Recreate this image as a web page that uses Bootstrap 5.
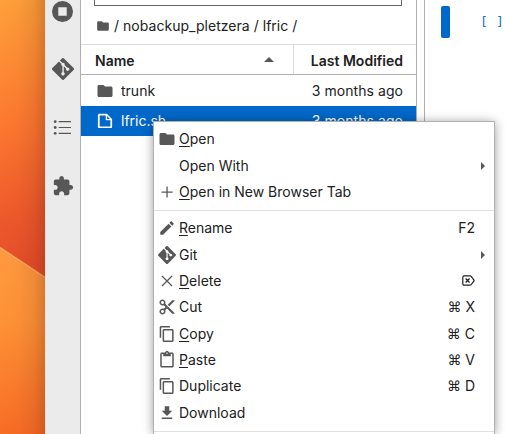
<!DOCTYPE html>
<html lang="en">
<head>
<meta charset="utf-8">
<title>File browser</title>
<link href="https://cdn.jsdelivr.net/npm/bootstrap@5.3.0/dist/css/bootstrap.min.css" rel="stylesheet">
<style>
body{font-family:Inter,"Liberation Sans",sans-serif;font-size:14px;line-height:20px;color:#212121;width:506px;height:434px}
.wall{width:45px}
.rail{width:36px;background:#ebebeb;border-right:1px solid #b0b0b0}
.rail svg{fill:#575757;display:block}
.rail-item{height:58.3px}
.rail-list{margin-top:-18px}
.browser{width:336px;border-right:1px solid #b0b0b0}
.filter{height:6px;margin:0 14px 0 13px;border:1px solid #666;border-top:0}
.crumbs{height:39px;padding:1px 0 0 15px;border-bottom:1px solid #dcdcdc;letter-spacing:.03px;white-space:pre}
.crumbs svg,.file-row svg{fill:#575757}
.head{height:30px;border-bottom:1px solid #b0b0b0;font-weight:600;padding-top:3px}
.head-name{width:213px;padding:3px 19px 0 14px;border-right:1px solid #dcdcdc;margin-top:-3px}
.head-mod{padding-right:13px}
.file-list{padding-top:1px}
.file-row{height:30px;padding:0 13px 0 15px}
.file-row.picked{background:#0068c9;color:#fff}
.file-row.picked svg{fill:#fff}
.file-label{margin-left:7px}
.ago{letter-spacing:.06px}
.gutter{width:8px;border-right:1px solid #b0b0b0}
.cell-bar{width:9px;height:32px;margin:6px 0 0 16px;border-radius:2px;background:#0068c9}
.prompt{font-family:"DejaVu Sans Mono",monospace;font-size:13px;color:#1f70b8;margin:12px 0 0 30px;white-space:pre;letter-spacing:.2px}
.ctx{position:absolute;left:153px;top:121px;bottom:0;width:342px;background:#fff;border:1px solid #b0b0b0;border-bottom:0;box-shadow:0 1px 10px rgba(0,0,0,.38)}
.ctx-body{height:313px;padding-top:4px}
.ctx-item{height:26.36px;padding:0 9px 0 4px}
.ctx-icon{width:18px;height:18px;margin-right:3px}
.ctx-icon svg{display:block;fill:#575757}
.ctx u{text-underline-offset:2px;text-decoration-thickness:1px}
.keys{margin-right:10px}
.keys span{font-family:"DejaVu Sans",sans-serif;font-size:14px}
.sep{height:1px;background:#e2e2e2;margin:5px 0 4px}
.sep:last-child{margin-bottom:0}
</style>
</head>
<body class="overflow-hidden bg-white position-relative">
<svg width="0" height="0" class="position-absolute">
<symbol id="folder" viewBox="0 0 24 24"><path d="M10 4H4c-1.1 0-1.99.9-1.99 2L2 18c0 1.1.9 2 2 2h16c1.1 0 2-.9 2-2V8c0-1.1-.9-2-2-2h-8l-2-2z"/></symbol>
<symbol id="git" viewBox="0 0 92 92"><path d="M90.156 41.965 50.036 1.848a5.918 5.918 0 0 0-8.372 0l-8.328 8.332 10.566 10.566a7.03 7.03 0 0 1 7.23 1.684 7.034 7.034 0 0 1 1.669 7.277l10.187 10.184a7.028 7.028 0 0 1 7.278 1.672 7.04 7.04 0 0 1 0 9.957 7.05 7.05 0 0 1-9.965 0 7.044 7.044 0 0 1-1.528-7.66l-9.5-9.497V59.36a7.04 7.04 0 0 1 1.86 11.29 7.04 7.04 0 0 1-9.957 0 7.04 7.04 0 0 1 0-9.958 7.06 7.06 0 0 1 2.304-1.539V33.926a7.049 7.049 0 0 1-3.82-9.234L29.242 14.272 1.73 41.777a5.918 5.918 0 0 0 0 8.371L41.852 90.27a5.925 5.925 0 0 0 8.37 0l39.934-39.934a5.925 5.925 0 0 0 0-8.371"/></symbol>
<symbol id="copy" viewBox="0 0 18 18"><path d="M11.9,1H3.2C2.4,1,1.7,1.7,1.7,2.5v10.2h1.5V2.5h8.7V1z M14.1,3.9h-8c-0.8,0-1.5,0.7-1.5,1.5v10.2c0,0.8,0.7,1.5,1.5,1.5h8c0.8,0,1.5-0.7,1.5-1.5V5.4C15.5,4.6,14.9,3.9,14.1,3.9z M14.1,15.5h-8V5.4h8V15.5z"/></symbol>
</svg>
<div class="d-flex vh-100 overflow-hidden">
  <div class="wall flex-shrink-0">
    <svg class="d-block" width="45" height="434">
      <defs>
        <linearGradient id="w1" gradientUnits="userSpaceOnUse" x1="0" y1="0" x2="30" y2="270"><stop offset="0" stop-color="#ffa03a"/><stop offset=".45" stop-color="#fd7930"/><stop offset=".8" stop-color="#ee592b"/><stop offset="1" stop-color="#e64e29"/></linearGradient>
        <linearGradient id="w2" x1="0" y1="0" x2="0" y2="1"><stop offset="0" stop-color="#ff9a40"/><stop offset=".4" stop-color="#ff9236"/><stop offset="1" stop-color="#f86c25"/></linearGradient>
        <linearGradient id="w3"><stop offset="0" stop-color="#300" stop-opacity="0"/><stop offset=".4" stop-color="#300" stop-opacity=".02"/><stop offset=".75" stop-color="#300" stop-opacity=".08"/><stop offset="1" stop-color="#300" stop-opacity=".19"/></linearGradient>
      </defs>
      <rect width="45" height="280" fill="url(#w1)"/>
      <path d="M0 247L45 277V434H0z" fill="url(#w2)"/>
      <path d="M0 247.5L45 277.5" stroke="#ffa95c" stroke-width="1.5"/>
      <rect width="45" height="434" fill="url(#w3)"/>
    </svg>
  </div>
  <div class="rail flex-shrink-0 d-flex flex-column align-items-center">
    <div class="rail-list">
      <div class="rail-item d-flex align-items-center"><svg width="21" height="21" viewBox="0 0 21 21"><path fill-rule="evenodd" d="M10.5 0a10.5 10.5 0 1 0 0 21a10.5 10.5 0 1 0 0-21zM6.300 6.300h8.400v8.400H6.300z"/></svg></div>
      <div class="rail-item d-flex align-items-center"><svg width="22" height="22"><use href="#git"/></svg></div>
      <div class="rail-item d-flex align-items-center"><svg width="21" height="21" viewBox="0 0 21 21"><path d="M6.700 4.100h12.300v1.200H6.700zM6.700 9.900h12.300v1.200H6.700zM6.700 15.700h12.300v1.200H6.700z"/><circle cx="3.200" cy="4.700" r="1.400"/><circle cx="3.200" cy="10.500" r="1.400"/><circle cx="3.200" cy="16.300" r="1.400"/></svg></div>
      <div class="rail-item d-flex align-items-center"><svg width="22" height="22" viewBox="0 0 24 24"><path d="M20.500 11H19V7c0-1.100-.900-2-2-2h-4V3.500C13 2.120 11.880 1 10.500 1S8 2.120 8 3.500V5H4c-1.100 0-1.990.900-1.990 2v3.800H3.500c1.490 0 2.700 1.210 2.700 2.700s-1.210 2.700-2.700 2.700H2V20c0 1.100.900 2 2 2h3.800v-1.500c0-1.490 1.210-2.700 2.700-2.700s2.700 1.210 2.700 2.700V22H17c1.100 0 2-.900 2-2v-4h1.500c1.380 0 2.500-1.120 2.500-2.500S21.880 11 20.500 11z"/></svg></div>
    </div>
  </div>
  <div class="browser flex-shrink-0">
    <div class="filter"></div>
    <div class="crumbs d-flex align-items-center"><svg width="14" height="14"><use href="#folder"/></svg><span class="ms-1">/ nobackup_pletzera / lfric /</span></div>
    <div class="head d-flex">
      <div class="head-name d-flex align-items-center justify-content-between"><span>Name</span><svg class="mb-1" width="10" height="5" viewBox="0 0 10 5"><path d="M0 5L5 0l5 5z" fill="#575757"/></svg></div>
      <div class="head-mod flex-grow-1 d-flex align-items-center justify-content-end">Last Modified</div>
    </div>
    <div class="file-list">
      <div class="file-row d-flex align-items-center"><svg width="18" height="18"><use href="#folder"/></svg><span class="file-label flex-grow-1">trunk</span><span class="ago">3 months ago</span></div>
      <div class="file-row picked d-flex align-items-center"><svg width="18" height="18" viewBox="0 0 22 22"><path d="M19.300 8.200l-5.500-5.500c-.300-.300-.700-.500-1.200-.500H3.900c-.800.100-1.600.900-1.600 1.800v14.100c0 .900.700 1.600 1.600 1.600h14.200c.900 0 1.600-.700 1.600-1.600V9.400c.100-.500-.100-.900-.400-1.200zm-5.800-3.300l3.400 3.600h-3.400V4.900zm3.900 12.700H4.700c-.100 0-.200 0-.200-.200V4.700c0-.200.100-.300.200-.300h7.200v4.400s0 .800.300 1.100c.300.300 1.100.300 1.100.300h4.300v7.200s-.100.200-.200.200z"/></svg><span class="file-label flex-grow-1">lfric.sh</span><span class="ago">3 months ago</span></div>
    </div>
  </div>
  <div class="gutter flex-shrink-0"></div>
  <div class="flex-grow-1 d-flex align-items-start">
    <div class="cell-bar flex-shrink-0"></div>
    <div class="prompt">[ ]</div>
  </div>
</div>
<div class="ctx"><div class="ctx-body overflow-hidden">
  <div class="ctx-item d-flex align-items-center"><div class="ctx-icon"><svg width="18" height="18"><use href="#folder"/></svg></div><div class="flex-grow-1"><u>O</u>pen</div></div>
  <div class="ctx-item d-flex align-items-center"><div class="ctx-icon"></div><div class="flex-grow-1">Open With</div><svg width="4" height="8"><path d="M0 0L4 4L0 8z" fill="#575757"/></svg></div>
  <div class="ctx-item d-flex align-items-center"><div class="ctx-icon"><svg width="18" height="18"><path d="M8.400 3.500h1.300v4.900h4.900v1.300H9.700v4.900H8.400V9.700H3.500V8.400h4.900z"/></svg></div><div class="flex-grow-1"><u>O</u>pen in New Browser Tab</div></div>
  <div class="sep"></div>
  <div class="ctx-item d-flex align-items-center"><div class="ctx-icon"><svg width="18" height="18" viewBox="0 0 24 24"><path d="M3 17.250V21h3.750L17.810 9.940l-3.750-3.750L3 17.250zM20.710 7.040c.390-.390.390-1.020 0-1.410l-2.340-2.340c-.390-.390-1.020-.390-1.410 0l-1.830 1.830 3.750 3.750 1.830-1.830z"/></svg></div><div class="flex-grow-1"><u>R</u>ename</div><div class="keys">F2</div></div>
  <div class="ctx-item d-flex align-items-center"><div class="ctx-icon"><svg width="18" height="18"><use href="#git"/></svg></div><div class="flex-grow-1">Git</div><svg width="4" height="8"><path d="M0 0L4 4L0 8z" fill="#575757"/></svg></div>
  <div class="ctx-item d-flex align-items-center"><div class="ctx-icon"><svg width="18" height="18"><path d="M4 4L14 14M14 4L4 14" stroke="#575757" stroke-width="1.300"/></svg></div><div class="flex-grow-1"><u>D</u>elete</div><div class="keys d-flex"><svg role="img" aria-label="Forward delete" width="13" height="11" viewBox="0 0 13 11" fill="none" stroke="#212121" stroke-width="1.200"><path d="M2.200.9h6q.6 0 1 .4l2.600 3.500q.5.700 0 1.400l-2.600 3.500q-.4.400-1 .4h-6Q.8 10.100.8 8.700V2.300Q.8.9 2.200.9zM3.600 3.500l4 4M7.600 3.500l-4 4"/></svg></div></div>
  <div class="ctx-item d-flex align-items-center"><div class="ctx-icon"><svg width="18" height="18" viewBox="0 0 24 24"><path d="M9.640 7.640c.230-.500.360-1.050.360-1.640 0-2.210-1.790-4-4-4S2 3.790 2 6s1.790 4 4 4c.590 0 1.140-.130 1.640-.360L10 12l-2.360 2.360C7.140 14.130 6.590 14 6 14c-2.210 0-4 1.790-4 4s1.790 4 4 4 4-1.790 4-4c0-.590-.130-1.140-.360-1.640L12 14l7 7h3v-1L9.640 7.640zM6 8c-1.100 0-2-.890-2-2s.900-2 2-2 2 .890 2 2-.900 2-2 2zm0 12c-1.100 0-2-.890-2-2s.900-2 2-2 2 .890 2 2-.900 2-2 2zm6-7.500c-.280 0-.500-.220-.500-.500s.220-.500.500-.500.500.220.500.500-.220.500-.500.500zM19 3l-6 6 2 2 7-7V3z"/></svg></div><div class="flex-grow-1">Cut</div><div class="keys"><span>⌘</span> X</div></div>
  <div class="ctx-item d-flex align-items-center"><div class="ctx-icon"><svg width="18" height="18"><use href="#copy"/></svg></div><div class="flex-grow-1"><u>C</u>opy</div><div class="keys"><span>⌘</span> C</div></div>
  <div class="ctx-item d-flex align-items-center"><div class="ctx-icon"><svg width="18" height="18" viewBox="0 0 24 24"><path d="M19 2h-4.180C14.400.840 13.300 0 12 0c-1.300 0-2.400.840-2.820 2H5c-1.100 0-2 .900-2 2v16c0 1.100.900 2 2 2h14c1.100 0 2-.900 2-2V4c0-1.100-.900-2-2-2zm-7 0c.550 0 1 .450 1 1s-.450 1-1 1-1-.450-1-1 .450-1 1-1zm7 18H5V4h2v3h10V4h2v16z"/></svg></div><div class="flex-grow-1"><u>P</u>aste</div><div class="keys"><span>⌘</span> V</div></div>
  <div class="ctx-item d-flex align-items-center"><div class="ctx-icon"><svg width="18" height="18"><use href="#copy"/></svg></div><div class="flex-grow-1">Duplicate</div><div class="keys"><span>⌘</span> D</div></div>
  <div class="ctx-item d-flex align-items-center"><div class="ctx-icon"><svg width="18" height="18" viewBox="0 0 24 24"><path d="M19 9h-4V3H9v6H5l7 7 7-7zM5 18v2h14v-2H5z"/></svg></div><div class="flex-grow-1">Download</div></div>
  <div class="sep"></div>
</div></div>
<script src="https://cdn.jsdelivr.net/npm/bootstrap@5.3.0/dist/js/bootstrap.bundle.min.js"></script>
</body>
</html>
